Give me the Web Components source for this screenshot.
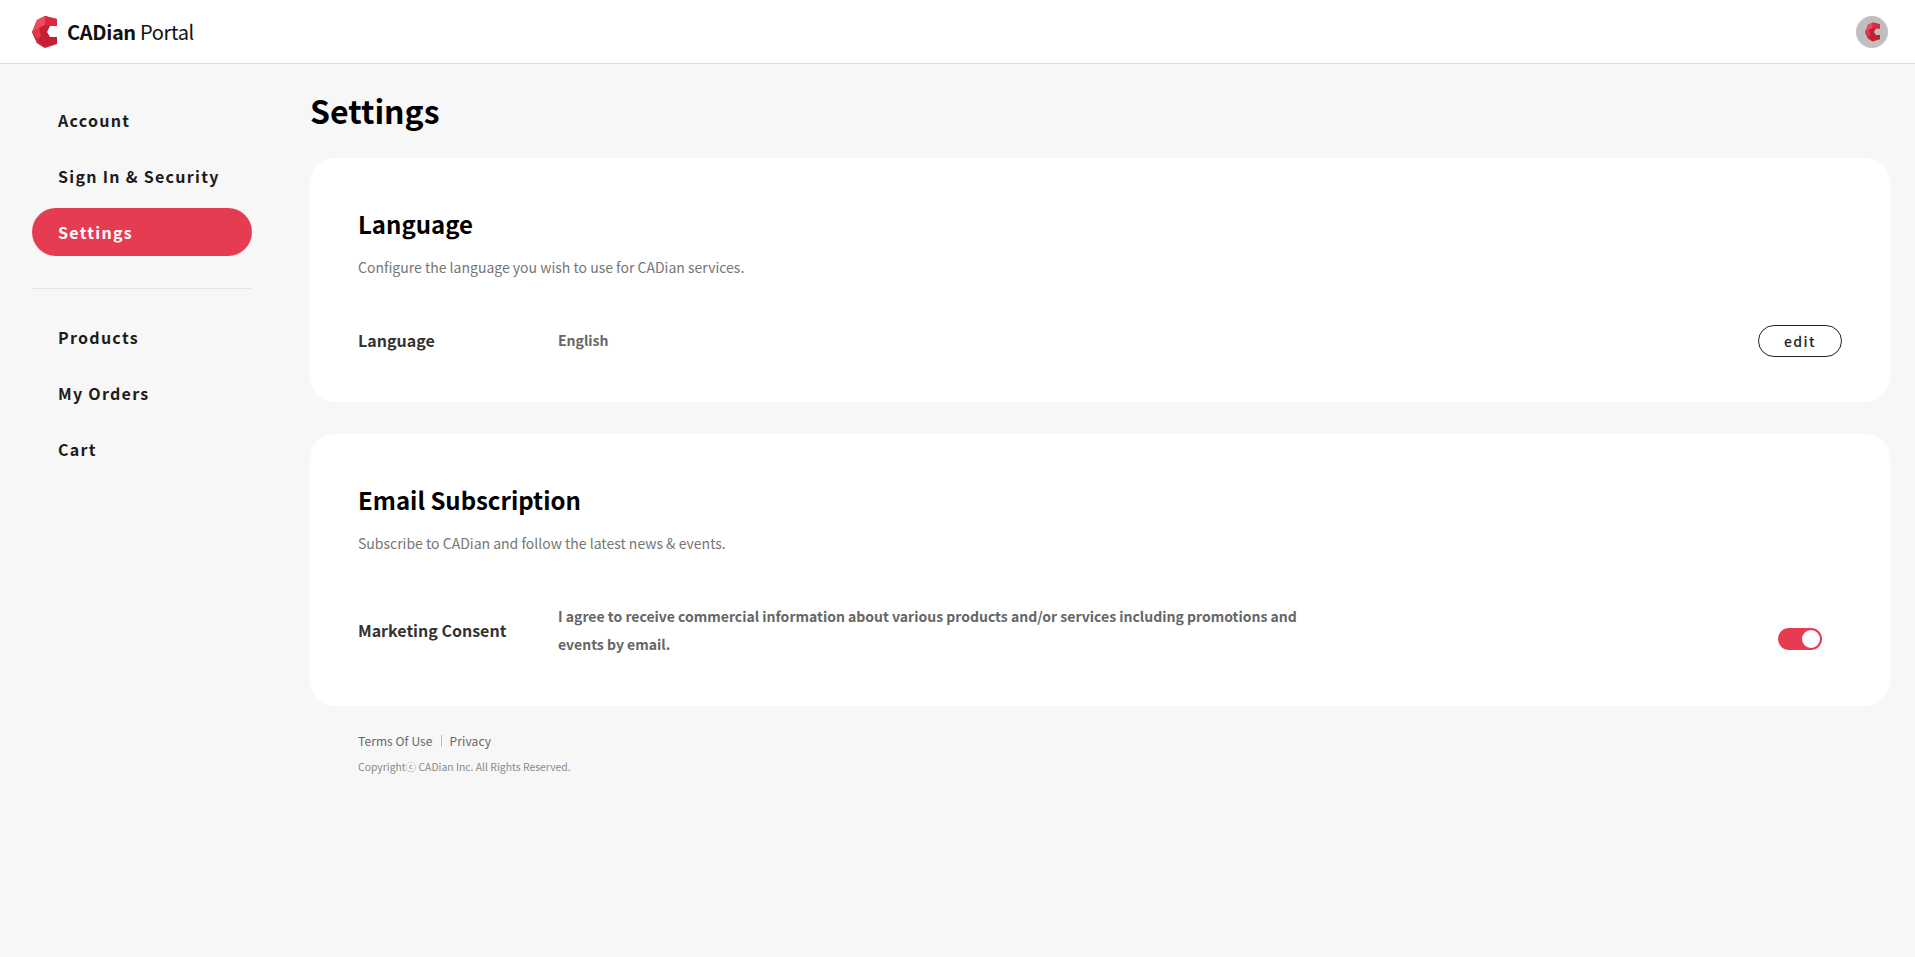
<!DOCTYPE html>
<html>
<head>
<meta charset="utf-8">
<title>CADian Portal</title>
<style>
html,body{margin:0;padding:0;height:100%;}
body{background:#f7f7f7;font-family:"Noto Sans CJK KR","Noto Sans",sans-serif;color:#000;}
</style>
</head>
<body>
<portal-header></portal-header>
<portal-layout>
  <side-nav slot="side">
    <nav-item>Account</nav-item>
    <nav-item>Sign In &amp; Security</nav-item>
    <nav-item active>Settings</nav-item>
    <nav-line></nav-line>
    <nav-item>Products</nav-item>
    <nav-item>My Orders</nav-item>
    <nav-item>Cart</nav-item>
  </side-nav>
  <settings-card heading="Language" desc="Configure the language you wish to use for CADian services.">
    <setting-row label="Language" kind="short">
      English
      <edit-button slot="action">edit</edit-button>
    </setting-row>
  </settings-card>
  <settings-card heading="Email Subscription" desc="Subscribe to CADian and follow the latest news &amp; events." class="tall">
    <setting-row label="Marketing Consent" kind="long">
      I agree to receive commercial information about various products and/or services including promotions and events by email.
      <toggle-switch slot="action"></toggle-switch>
    </setting-row>
  </settings-card>
  <portal-footer></portal-footer>
</portal-layout>

<script>
const logo = `<svg viewBox="0 0 25 32" xmlns="http://www.w3.org/2000/svg">
  <path fill="#c41f33" d="M13 0 25 3 25 10 18 10 15 16 18 21 25 21 25 28 13 32 5 27 0 16 5 4z"/>
  <path fill="#d9293f" d="M13 0 25 3 25 10 18 10 13 9z"/>
  <path fill="#ee4a5b" d="M13 0 5 4 0 16 7 12 13 9z"/>
  <path fill="#e03a4d" d="M0 16 7 12 9 20 6 24z"/>
  <path fill="#cf2a3d" d="M0 16 6 24 13 32 5 27z"/>
</svg>`

class PortalHeader extends HTMLElement {
    constructor() {
        super()
        this.attachShadow({ mode: 'open' }).innerHTML = `<style>
        :host{display:flex;align-items:center;justify-content:space-between;height:63px;background:#fff;border-bottom:1px solid #ddd;padding:0 27px 0 32px;}
        .brand{display:flex;align-items:center;gap:10px;font-size:20px;letter-spacing:-.35px;color:#111;}
        .brand svg{width:25px;height:32px;display:block;}
        b{font-weight:700;}
        .avatar{width:32px;height:32px;border-radius:50%;background:#bfbfbf;display:flex;align-items:center;justify-content:center;}
        .avatar svg{width:15px;height:20px;display:block;}
        </style>
        <div class="brand">${logo}<span><b>CADian</b> Portal</span></div>
        <div class="avatar">${logo}</div>`
    }
}

class PortalLayout extends HTMLElement {
    constructor() {
        super()
        this.attachShadow({ mode: 'open' }).innerHTML = `<style>
        :host{display:flex;padding:0 25px 0 32px;}
        .side{width:220px;flex:none;padding-top:32px;}
        main{flex:1;min-width:0;margin-left:58px;display:flex;flex-direction:column;}
        h1{margin:0;font-size:32px;line-height:46px;font-weight:700;padding:23px 0 25px;color:#000;}
        ::slotted(settings-card){margin-bottom:32px;}
        </style>
        <div class="side"><slot name="side"></slot></div>
        <main><h1>Settings</h1><slot></slot></main>`
    }
}

class SideNav extends HTMLElement {
    constructor() {
        super()
        this.attachShadow({ mode: 'open' }).innerHTML = `<style>
        :host{display:flex;flex-direction:column;gap:8px;}
        </style><slot></slot>`
    }
}

class NavItem extends HTMLElement {
    constructor() {
        super()
        this.attachShadow({ mode: 'open' }).innerHTML = `<style>
        :host{display:flex;align-items:center;height:48px;padding-left:26px;border-radius:24px;font-size:16px;font-weight:700;letter-spacing:1.28px;color:#1c1c1c;}
        :host([active]){background:#e63c52;color:#fff;}
        </style><slot></slot>`
    }
}

class NavLine extends HTMLElement {
    constructor() {
        super()
        this.attachShadow({ mode: 'open' }).innerHTML = `<style>
        :host{display:block;height:1px;background:#e6e6e6;margin:24px 0 16px;}
        </style>`
    }
}

class SettingsCard extends HTMLElement {
    constructor() {
        super()
        this.attachShadow({ mode: 'open' }).innerHTML = `<style>
        :host{display:block;background:#fff;border-radius:24px;padding:47px 48px 45px;}
        :host(.tall){padding-bottom:46px;}
        h2{margin:0;font-size:24px;line-height:38px;font-weight:700;color:#000;}
        p{margin:12px 0 0;font-size:14px;line-height:24px;color:#767676;}
        </style>
        <h2>${this.getAttribute('heading')}</h2>
        <p>${this.getAttribute('desc')}</p>
        <slot></slot>`
    }
}

class SettingRow extends HTMLElement {
    constructor() {
        super()
        const long = this.getAttribute('kind') === 'long'
        this.attachShadow({ mode: 'open' }).innerHTML = `<style>
        :host{display:flex;align-items:center;margin-top:${long ? '47px' : '46px'};}
        .label{width:200px;flex:none;font-size:16px;font-weight:700;color:#333;padding-bottom:2px;}
        .value{flex:1;font-size:14px;font-weight:700;line-height:28px;color:#666;max-width:760px;padding-bottom:2px;}
        .action{margin-left:auto;}
        </style>
        <div class="label">${this.getAttribute('label')}</div>
        <div class="value"><slot></slot></div>
        <div class="action"><slot name="action"></slot></div>`
    }
}

class EditButton extends HTMLElement {
    constructor() {
        super()
        this.attachShadow({ mode: 'open' }).innerHTML = `<style>
        :host{display:flex;align-items:center;justify-content:center;box-sizing:border-box;width:84px;height:32px;border:1px solid #222;border-radius:16px;font-size:14px;font-weight:500;letter-spacing:1.4px;color:#222;}
        </style><slot></slot>`
    }
}

class ToggleSwitch extends HTMLElement {
    constructor() {
        super()
        this.attachShadow({ mode: 'open' }).innerHTML = `<style>
        :host{display:block;position:relative;width:44px;height:22px;border-radius:11px;background:#e63c52;margin:16px 20px 0;}
        i{position:absolute;top:2px;right:2px;width:18px;height:18px;border-radius:50%;background:#fff;}
        </style><i></i>`
    }
}

class PortalFooter extends HTMLElement {
    constructor() {
        super()
        this.attachShadow({ mode: 'open' }).innerHTML = `<style>
        :host{display:block;padding:0 48px;}
        .links{display:flex;align-items:center;font-size:12px;letter-spacing:.1px;line-height:20px;color:#666;margin-top:-7px;}
        .links span+span{margin-left:8px;padding-left:8px;border-left:1px solid #bbb;line-height:12px;}
        small{display:block;font-size:10.4px;line-height:18px;color:#8a8a8a;margin-top:7px;}
        </style>
        <div class="links"><span>Terms Of Use</span><span>Privacy</span></div>
        <small>Copyrightⓒ CADian Inc. All Rights Reserved.</small>`
    }
}

customElements.define('portal-header', PortalHeader)
customElements.define('portal-layout', PortalLayout)
customElements.define('side-nav', SideNav)
customElements.define('nav-item', NavItem)
customElements.define('nav-line', NavLine)
customElements.define('settings-card', SettingsCard)
customElements.define('setting-row', SettingRow)
customElements.define('edit-button', EditButton)
customElements.define('toggle-switch', ToggleSwitch)
customElements.define('portal-footer', PortalFooter)
</script>
</body>
</html>
